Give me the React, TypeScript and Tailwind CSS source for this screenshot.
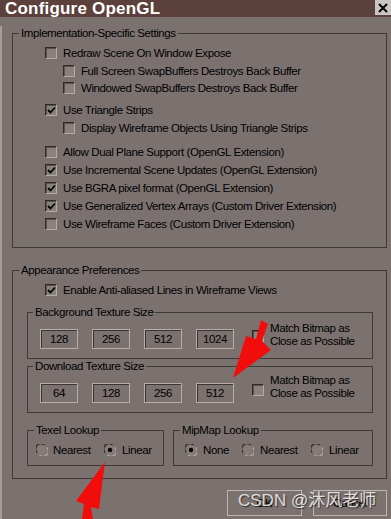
import React from "react";

const Check = ({ checked }: { checked?: boolean }) => (
  <div className="w-[12px] h-[12px] shrink-0 border-t border-l border-t-[#2f2a28] border-l-[#2f2a28] border-b border-r border-b-[#b3aba8] border-r-[#b3aba8] bg-[#8a817d] flex items-center justify-center shadow-[inset_1px_1px_0_#5a5250]">
    {checked && (
      <svg width="9" height="9" viewBox="0 0 9 9">
        <path d="M1 4 L3.5 6.5 L8 1.5" stroke="#000" strokeWidth="1.8" fill="none" />
      </svg>
    )}
  </div>
);

const Radio = ({ checked }: { checked?: boolean }) => (
  <svg width="12" height="12" viewBox="0 0 12 12" className="shrink-0">
    <circle cx="6" cy="6" r="5" fill="#857c78" />
    <path d="M1.2 8.5 A5 5 0 0 1 8.5 1.2" stroke="#2f2a28" strokeWidth="1.2" fill="none" />
    <path d="M10.8 3.5 A5 5 0 0 1 3.5 10.8" stroke="#b3aba8" strokeWidth="1.2" fill="none" />
    {checked && <circle cx="6" cy="6" r="2.2" fill="#000" />}
  </svg>
);

const Row = ({ checked, label, cls = "h-[18px]" }: { checked?: boolean; label: string; cls?: string }) => (
  <div className={`flex items-center gap-[6px] ${cls}`}>
    <Check checked={checked} />
    <span className="leading-[14px] whitespace-nowrap">{label}</span>
  </div>
);

const Box = ({ v }: { v: string }) => (
  <div className="w-[38px] h-[20px] shrink-0 border border-[#b6aeab] shadow-[inset_1px_1px_0_#3a3432] flex items-center justify-center leading-[14px]">
    {v}
  </div>
);

const Legend = ({ children, ml = "ml-[6px]" }: { children: React.ReactNode; ml?: string }) => (
  <legend className={`${ml} px-[2px] leading-[14px] whitespace-nowrap`}>{children}</legend>
);

const TexRow = ({ vals, textCls, checkCls }: { vals: string[]; textCls: string; checkCls: string }) => (
  <div className="flex items-start h-[20px]">
    <div className="flex gap-[14px]">
      {vals.map((v) => (
        <Box key={v} v={v} />
      ))}
    </div>
    <div className={`ml-[18px] w-[12px] ${checkCls}`}>
      <Check />
    </div>
    <div className={`ml-[6px] leading-[13px] whitespace-nowrap ${textCls}`}>
      <div>Match Bitmap as</div>
      <div>Close as Possible</div>
    </div>
  </div>
);

export default function App() {
  return (
    <div className="w-[391px] h-[519px] bg-[#7b7270] relative overflow-hidden text-[11.5px] tracking-[-0.4px] text-black font-['Liberation_Sans',sans-serif]">
      {/* title bar */}
      <div className="h-[17px] bg-[#5c403b] flex items-start relative">
        <div className="ml-[5px] text-white font-bold text-[17px] leading-[17px] tracking-[0.2px] whitespace-nowrap">Configure OpenGL</div>
        <div className="absolute right-0 top-0 w-[16px] h-[15px] bg-[#c9c5c2] flex items-center justify-center">
          <svg width="10" height="10" viewBox="0 0 10 10">
            <path d="M1 1 L9 9 M9 1 L1 9" stroke="#000" strokeWidth="2" />
          </svg>
        </div>
      </div>

      {/* body */}
      <div className="h-[502px] border-l-2 border-[#a59d9a] pl-[10px]">
        <fieldset className="mt-[9px] w-[375px] border border-[#3e3836] m-0 p-0">
          <Legend>Implementation-Specific Settings</Legend>
          <div className="pt-[4px] pb-[14px] pl-[32px]">
            <Row label="Redraw Scene On Window Expose" />
            <div className="pl-[18px]">
              <Row label="Full Screen SwapBuffers Destroys Back Buffer" />
              <Row label="Windowed SwapBuffers Destroys Back Buffer" cls="h-[16px]" />
            </div>
            <div className="mt-[5px]">
              <Row checked label="Use Triangle Strips" />
              <div className="pl-[18px]">
                <Row label="Display Wireframe Objects Using Triangle Strips" />
              </div>
            </div>
            <div className="mt-[6px]">
              <Row label="Allow Dual Plane Support (OpenGL Extension)" />
              <Row checked label="Use Incremental Scene Updates (OpenGL Extension)" />
              <Row checked label="Use BGRA pixel format (OpenGL Extension)" />
              <Row checked label="Use Generalized Vertex Arrays (Custom Driver Extension)" />
              <Row label="Use Wireframe Faces (Custom Driver Extension)" />
            </div>
          </div>
        </fieldset>

        <fieldset className="mt-[15px] w-[375px] border border-[#3e3836] m-0 p-0">
          <Legend>Appearance Preferences</Legend>
          <div className="pt-[4px] pb-[12px] pl-[14px] pr-[13px]">
            <div className="pl-[18px]">
              <Row checked label="Enable Anti-aliased Lines in Wireframe Views" />
            </div>
            <fieldset className="mt-[6px] border border-[#3e3836] m-0 p-0">
              <Legend ml="ml-[5px]">Background Texture Size</Legend>
              <div className="pt-[10px] pb-[9px] pl-[12px]">
                <TexRow vals={["128", "256", "512", "1024"]} textCls="-mt-[7px]" checkCls="mt-[1px]" />
              </div>
            </fieldset>
            <fieldset className="border border-[#3e3836] m-0 p-0">
              <Legend ml="ml-[5px]">Download Texture Size</Legend>
              <div className="pt-[10px] pb-[9px] pl-[12px]">
                <TexRow vals={["64", "128", "256", "512"]} textCls="-mt-[9px]" checkCls="mt-[1px]" />
              </div>
            </fieldset>
            <div className="mt-[10px] flex gap-[9px]">
              <fieldset className="w-[137px] border border-[#3e3836] m-0 p-0">
                <Legend ml="ml-[6px]">Texel Lookup</Legend>
                <div className="pt-[4px] pb-[6px] pl-[8px] flex h-[28px] items-center">
                  <div className="w-[68px] flex items-center gap-[5px]">
                    <Radio />
                    <span className="leading-[14px]">Nearest</span>
                  </div>
                  <div className="flex items-center gap-[6px]">
                    <Radio checked />
                    <span className="leading-[14px]">Linear</span>
                  </div>
                </div>
              </fieldset>
              <fieldset className="w-[200px] border border-[#3e3836] m-0 p-0">
                <Legend ml="ml-[6px]">MipMap Lookup</Legend>
                <div className="pt-[4px] pb-[6px] pl-[11px] flex h-[28px] items-center">
                  <div className="w-[57px] flex items-center gap-[6px]">
                    <Radio checked />
                    <span className="leading-[14px]">None</span>
                  </div>
                  <div className="w-[69px] flex items-center gap-[6px]">
                    <Radio />
                    <span className="leading-[14px]">Nearest</span>
                  </div>
                  <div className="flex items-center gap-[6px]">
                    <Radio />
                    <span className="leading-[14px]">Linear</span>
                  </div>
                </div>
              </fieldset>
            </div>
          </div>
        </fieldset>

        <div className="mt-[11px] ml-[215px] flex gap-[11px]">
          <div className="w-[75px] h-[26px] border border-[#bdb5b1] flex items-center justify-center leading-[14px]">OK</div>
          <div className="w-[74px] h-[26px] border border-[#bdb5b1] flex items-center justify-center leading-[14px]">Cancel</div>
        </div>
      </div>

      {/* red arrows overlay */}
      <svg className="absolute left-0 top-0 pointer-events-none" width="391" height="519" viewBox="0 0 391 519">
        <polygon points="261,320 268,324 262,341 271,350 233,378 246,336 256,339" fill="#f20d0d" />
        <polygon points="105,462 99,509 91,507 93,519 82,519 84,504 76,501" fill="#f20d0d" />
      </svg>

      {/* watermark */}
      <div className="absolute left-[238px] top-[490px] text-[17px] leading-[22px] tracking-normal text-white/80 whitespace-nowrap font-['Liberation_Sans','Noto_Sans_CJK_SC',sans-serif] [text-shadow:1px_1px_1px_rgba(0,0,0,0.6)]">
        CSDN @沐风老师
      </div>
    </div>
  );
}
